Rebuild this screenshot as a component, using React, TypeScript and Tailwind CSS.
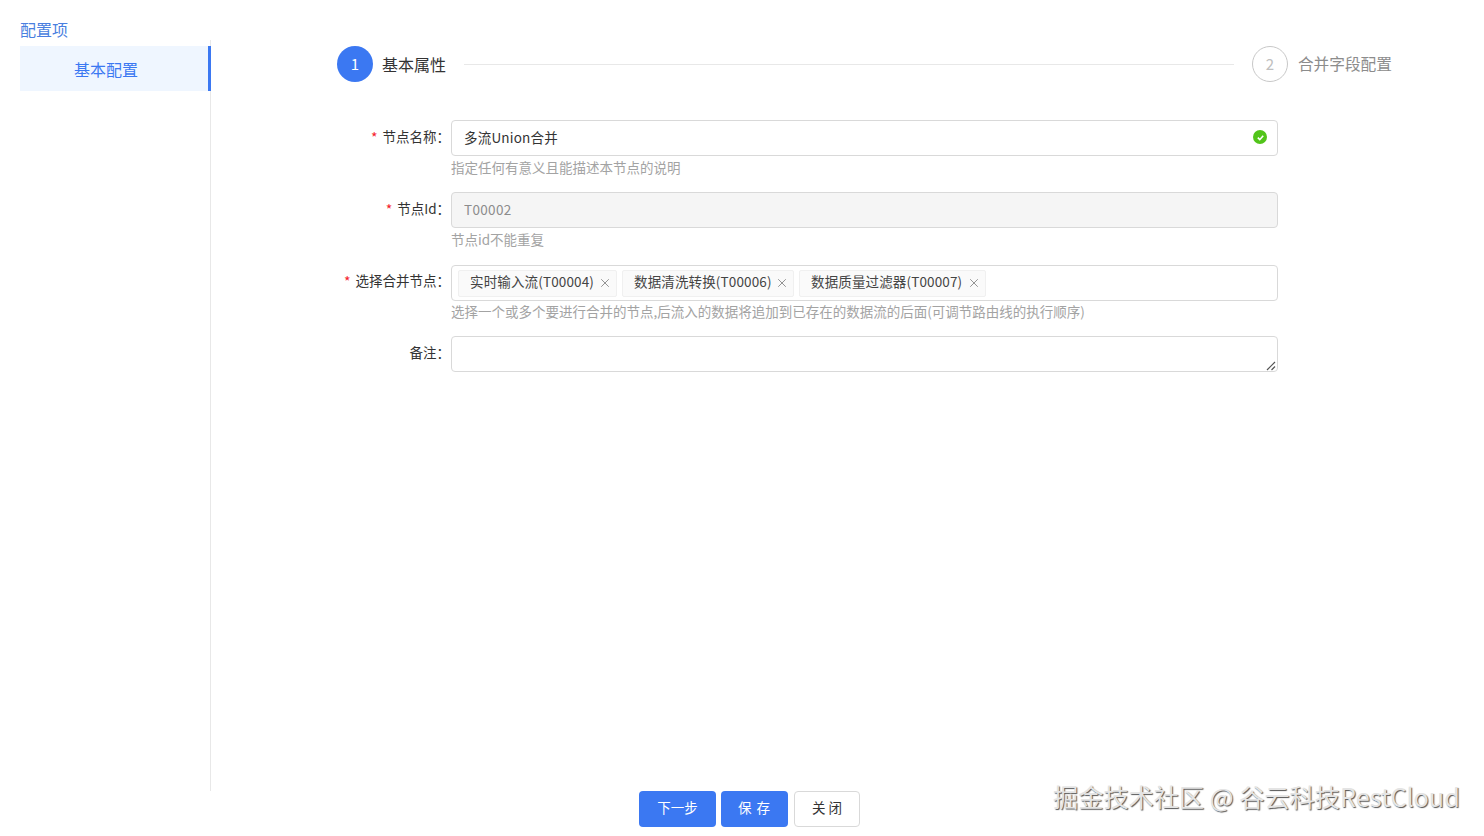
import React from "react";
import { X } from "lucide-react";

const font = { fontFamily: '"Noto Sans CJK SC", sans-serif' };

function Req() {
  return <span className="mr-[5px] text-[14px] leading-none text-[#f5222d]">*</span>;
}

function Row({ label, required, help, children }: { label: string; required?: boolean; help?: string; children: React.ReactNode }) {
  return (
    <div className="flex h-[72px]">
      <label className="flex h-9 w-[240px] shrink-0 items-center justify-end pb-[3px] pr-px text-[13.5px] text-[#333]">
        {required && <Req />}
        {label}：
      </label>
      <div className="w-[827px]">
        {children}
        {help && <div className="h-[24px] whitespace-nowrap text-[13.5px] leading-[22px] text-[#a3a3a3]">{help}</div>}
      </div>
    </div>
  );
}

function Tag({ text, w }: { text: string; w: string }) {
  return (
    <span className={`flex h-[27px] items-center justify-between rounded-[2px] border border-[#f0f0f0] bg-[#fafafa] pb-[3px] pl-[11px] pr-[4px] text-[13.5px] tracking-[0.14px] text-[#444] ${w}`}>
      <span className="whitespace-nowrap">{text}</span>
      <X size={14} strokeWidth={1.6} className="mt-[3px] text-[#8c8c8c]" />
    </span>
  );
}

export default function App() {
  return (
    <div className="relative flex h-[836px] w-[1484px] flex-col overflow-hidden bg-white" style={font}>
      <div className="flex h-[791px]">
        <aside className="ml-5 flex w-[191px] shrink-0 flex-col">
          <div className="h-10 pt-[19px] text-[16px] leading-[20px] text-[#4a7fe0]">配置项</div>
          <div className="flex-1 border-r border-[#e8e8e8] pt-[6px]">
            <div className="-mr-px flex h-[45px] items-center justify-center border-r-[3px] border-[#3b78f2] bg-[#eff6ff] pr-[16px] text-[16px] text-[#3b78f2]">
              基本配置
            </div>
          </div>
        </aside>

        <main className="flex-1">
          <div className="ml-[126px] mt-[46px] flex h-9 w-[1055px] items-center">
            <span className="flex h-9 w-9 items-center justify-center rounded-full bg-[#3b78f2] text-[15px] text-white">1</span>
            <span className="ml-[9px] whitespace-nowrap pb-px text-[16px] text-[#333]">基本属性</span>
            <span className="mx-[18px] h-px flex-1 bg-[#e8e8e8]" />
            <span className="flex h-9 w-9 items-center justify-center rounded-full border border-[#c8c8c8] text-[15px] text-[#c0c0c0]">2</span>
            <span className="ml-[10px] whitespace-nowrap text-[15.7px] text-[#8c8c8c]">合并字段配置</span>
          </div>

          <form className="mt-[38px]">
            <Row label="节点名称" required help="指定任何有意义且能描述本节点的说明">
              <div className="relative">
                <input readOnly value="多流Union合并" className="h-9 w-full rounded border border-[#d9d9d9] bg-white px-3 pb-[2px] text-[13.5px] tracking-[0.2px] text-[#333] outline-none" />
                <span className="absolute right-[11px] top-[10px] flex h-[14px] w-[14px] items-center justify-center rounded-full bg-[#52c41a]">
                  <svg width="9" height="9" viewBox="0 0 10 10" fill="none" stroke="white" strokeWidth="1.8"><path d="M2 5.2 4.2 7.4 8 3" /></svg>
                </span>
              </div>
            </Row>
            <Row label="节点Id" required help="节点id不能重复">
              <input readOnly value="T00002" className="h-9 w-full rounded border border-[#d9d9d9] bg-[#f5f5f5] px-3 pb-[2px] text-[13.5px] tracking-[0.35px] text-[#8c8c8c] outline-none" />
            </Row>
            <Row label="选择合并节点" required help="选择一个或多个要进行合并的节点,后流入的数据将追加到已存在的数据流的后面(可调节路由线的执行顺序)">
              <div className="-mb-px mt-px flex h-9 items-center gap-[5px] rounded border border-[#d9d9d9] bg-white pl-[6px]">
                <Tag text="实时输入流(T00004)" w="w-[159px]" />
                <Tag text="数据清洗转换(T00006)" w="w-[172px]" />
                <Tag text="数据质量过滤器(T00007)" w="w-[187px]" />
              </div>
            </Row>
            <Row label="备注">
              <div className="relative">
                <textarea readOnly className="block h-9 min-h-9 w-full resize-none rounded border border-[#d9d9d9] bg-white px-3 outline-none" />
                <svg className="pointer-events-none absolute bottom-[1px] right-[2px]" width="10" height="10" viewBox="0 0 10 10" stroke="#555" strokeWidth="1.2" fill="none">
                  <path d="M1 9 9 1M5.5 9 9 5.5" />
                </svg>
              </div>
            </Row>
          </form>
        </main>
      </div>

      <footer className="flex justify-center gap-[5px] pl-[15px]">
        <button className="h-9 w-[77px] rounded bg-[#3b78f2] pb-[3px] text-[13.5px] text-white">下一步</button>
        <button className="h-9 w-[67px] rounded bg-[#3b78f2] pb-[3px] text-[13.5px] tracking-[1px] text-white">保 存</button>
        <button className="ml-px h-9 w-[66px] rounded border border-[#d9d9d9] bg-white pb-[3px] text-[13.5px] text-[#333]">关 闭</button>
      </footer>

      <div className="absolute left-[1053px] top-[778px] whitespace-nowrap text-[25.2px] leading-[36px] text-[#e4e4e4] [text-shadow:1px_1px_1px_#555]">
        掘金技术社区 @ 谷云科技RestCloud
      </div>
    </div>
  );
}
